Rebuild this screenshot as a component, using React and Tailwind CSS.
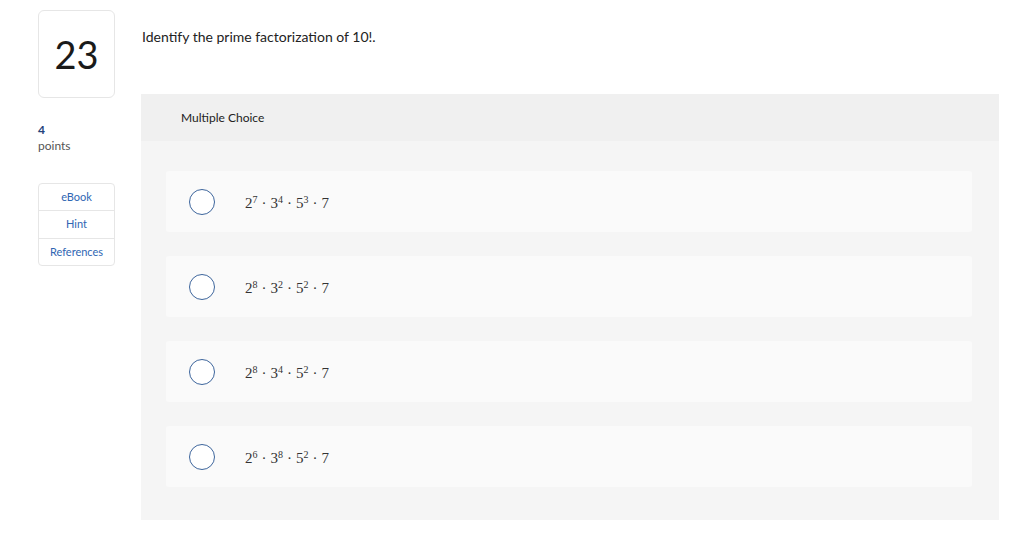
import React from "react";

const options = [
  [["2", "7"], ["3", "4"], ["5", "3"]],
  [["2", "8"], ["3", "2"], ["5", "2"]],
  [["2", "8"], ["3", "4"], ["5", "2"]],
  [["2", "6"], ["3", "8"], ["5", "2"]],
];

function Expr({ parts }) {
  return (
    <span className="font-['Liberation_Serif',serif] text-[15px] text-[#333]">
      {parts.map(([b, e], i) => (
        <span key={i}>
          {b}
          <sup className="text-[10px] relative -top-[5px]">{e}</sup>
          <span className="mx-[4px]">·</span>
        </span>
      ))}
      7
    </span>
  );
}

export default function App() {
  return (
    <div className="w-[1024px] h-[536px] bg-white flex font-['Lato','Open_Sans',sans-serif] text-[#222]">
      <div className="w-[141px] shrink-0 pl-[38px] pt-[10px]">
        <div className="w-[77px] h-[88px] border border-[#e6e6e6] rounded-[6px] flex items-center justify-center">
          <span className="text-[38px] leading-none text-[#1a1a1a]">23</span>
        </div>
        <div className="mt-[24px] text-[12px] font-bold text-[#24427a] leading-[16px]">4</div>
        <div className="text-[12px] text-[#555] leading-[16px]">points</div>
        <div className="mt-[29px] w-[77px] border border-[#e6e6e6] rounded-[4px] text-[11px] text-[#2f66b3]">
          <div className="h-[27px] flex items-center justify-center border-b border-[#e6e6e6]">eBook</div>
          <div className="h-[28px] flex items-center justify-center border-b border-[#e6e6e6]">Hint</div>
          <div className="h-[26px] flex items-center justify-center">References</div>
        </div>
      </div>
      <div className="flex-1 pr-[25px]">
        <div className="h-[94px] pt-[26px] pl-[1px] text-[14px]">Identify the prime factorization of 10!.</div>
        <div className="bg-[#f5f5f5]">
          <div className="h-[47px] bg-[#f0f0f0] flex items-center pl-[40px] text-[12px] text-[#222]">Multiple Choice</div>
          <div className="pt-[30px] pb-[33px] pl-[25px] pr-[27px] flex flex-col gap-[24px]">
            {options.map((o, i) => (
              <div key={i} className="h-[61px] bg-[#fafafa] rounded-[3px] flex items-center pl-[23px]">
                <div className="w-[26px] h-[26px] rounded-full border border-[#3d659c] bg-white shrink-0"></div>
                <div className="ml-[30px] pt-[2px]">
                  <Expr parts={o} />
                </div>
              </div>
            ))}
          </div>
        </div>
      </div>
    </div>
  );
}
